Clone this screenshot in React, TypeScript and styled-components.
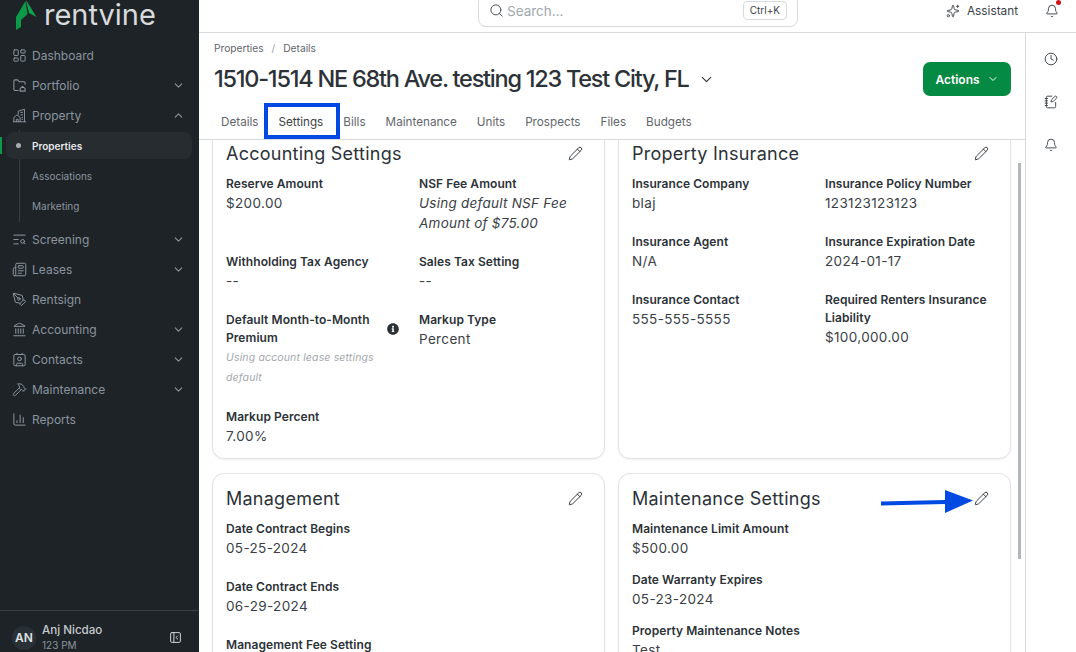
import React from 'react';
import styled, { createGlobalStyle } from 'styled-components';
import {
  Bell,
  ChartColumn,
  ChevronDown,
  ChevronUp,
  Clock,
  Contact,
  Hammer,
  Landmark,
  LayoutDashboard,
  Newspaper,
  NotebookPen,
  PanelLeftClose,
  Pencil,
  PenTool,
  Search,
  Sparkles,
  TextSearch,
} from 'lucide-react';
import { FaInfoCircle } from 'react-icons/fa';

const GlobalStyle = createGlobalStyle`
  html, body {
    margin: 0;
    height: 100%;
    overflow: hidden;
    background: #fff;
    font-family: Inter, "Liberation Sans", sans-serif;
  }
  * { box-sizing: border-box; }
`;

const FolderHome = () => (
  <svg width="15" height="15" viewBox="0 0 24 24" fill="none" stroke="currentColor" strokeWidth="1.7" strokeLinecap="round" strokeLinejoin="round">
    <path d="M10 20H5a2 2 0 0 1-2-2V5a2 2 0 0 1 2-2h4l2.5 3H19a2 2 0 0 1 2 2v2" />
    <path d="M13 17l4-3.5 4 3.5v4h-8z" />
  </svg>
);

const Buildings = () => (
  <svg width="15" height="15" viewBox="0 0 24 24" fill="none" stroke="currentColor" strokeWidth="1.5" strokeLinecap="round" strokeLinejoin="round">
    <path d="M2 22h20" />
    <path d="M10 10V5l10-3v20" />
    <path d="M3 22v-7l5-4 5 4v7" />
    <path d="M7 22v-4h3v4" />
    <path d="M14 7h3M14 11h3M16 15h1M16 18h1" />
  </svg>
);

const navTop = [
  { label: 'Dashboard', icon: <LayoutDashboard size={15} strokeWidth={1.6} /> },
  { label: 'Portfolio', icon: <FolderHome />, arrow: 'down' },
  { label: 'Property', icon: <Buildings />, arrow: 'up' },
];

const navBottom = [
  { label: 'Screening', icon: <TextSearch size={15} strokeWidth={1.6} />, arrow: 'down' },
  { label: 'Leases', icon: <Newspaper size={15} strokeWidth={1.6} />, arrow: 'down' },
  { label: 'Rentsign', icon: <PenTool size={15} strokeWidth={1.6} /> },
  { label: 'Accounting', icon: <Landmark size={15} strokeWidth={1.6} />, arrow: 'down' },
  { label: 'Contacts', icon: <Contact size={15} strokeWidth={1.6} />, arrow: 'down' },
  { label: 'Maintenance', icon: <Hammer size={15} strokeWidth={1.6} />, arrow: 'down' },
  { label: 'Reports', icon: <ChartColumn size={15} strokeWidth={1.6} /> },
];

const tabs = ['Details', 'Settings', 'Bills', 'Maintenance', 'Units', 'Prospects', 'Files', 'Budgets'];

const NavRow = ({ item }: { item: { label: string; icon: React.ReactNode; arrow?: string } }) => (
  <NavItem>
    <NavIcon>{item.icon}</NavIcon>
    <NavLabel>{item.label}</NavLabel>
    {item.arrow === 'down' && <ChevronDown size={13} />}
    {item.arrow === 'up' && <ChevronUp size={13} />}
  </NavItem>
);

const Field = ({ label, value }: { label: string; value?: string }) => (
  <FieldBox>
    <FieldLabel>{label}</FieldLabel>
    {value && <FieldValue>{value}</FieldValue>}
  </FieldBox>
);

const CardHead = ({ title }: { title: string }) => (
  <CardHeader>
    <CardTitle>{title}</CardTitle>
    <Pencil size={15} strokeWidth={1.5} color="#2f353a" />
  </CardHeader>
);

const App = () => {
  return (
    <Shell>
      <GlobalStyle />
      <Sidebar>
        <Logo>
          <svg width="21" height="30" viewBox="0 0 21 30">
            <path d="M10 0 L20.500 17 L13 13 z" fill="#12a550" />
            <path d="M9.500 1 L11.500 14 L5 20 L5 27 L0 30 L0 17 z" fill="#0b9a47" />
          </svg>
          <LogoText>rentvine</LogoText>
        </Logo>
        <Nav>
          {navTop.map((item) => (
            <NavRow key={item.label} item={item} />
          ))}
          <SubNav>
            <ActiveMark />
            <SubItem $active>
              <Dot />
              Properties
            </SubItem>
            <SubItem>Associations</SubItem>
            <SubItem>Marketing</SubItem>
          </SubNav>
          {navBottom.map((item) => (
            <NavRow key={item.label} item={item} />
          ))}
        </Nav>
        <UserBar>
          <Avatar>AN</Avatar>
          <UserText>
            <UserName>Anj Nicdao</UserName>
            <UserOrg>123 PM</UserOrg>
          </UserText>
          <PanelLeftClose size={13} strokeWidth={1.8} color="#d5d8db" />
        </UserBar>
      </Sidebar>

      <Main>
        <TopBar>
          <SearchBox>
            <Search size={15} strokeWidth={1.6} color="#4b5258" />
            <SearchText>Search...</SearchText>
            <Kbd>Ctrl+K</Kbd>
          </SearchBox>
          <TopActions>
            <Assistant>
              <Sparkles size={14} strokeWidth={1.6} />
              Assistant
            </Assistant>
            <BellWrap>
              <Bell size={14} strokeWidth={1.5} />
              <RedDot />
            </BellWrap>
          </TopActions>
        </TopBar>

        <Body>
          <Content>
            <PageHead>
              <Crumbs>
                <span>Properties</span>
                <CrumbSep>/</CrumbSep>
                <span>Details</span>
              </Crumbs>
              <TitleRow>
                <PageTitle>1510-1514 NE 68th Ave. testing 123 Test City, FL</PageTitle>
                <ChevronDown size={17} strokeWidth={1.6} color="#2c3238" />
                <ActionButton>
                  Actions
                  <ChevronDown size={12} strokeWidth={2} />
                </ActionButton>
              </TitleRow>
              <Tabs>
                {tabs.map((t) => (
                  <Tab key={t} $active={t === 'Settings'}>
                    {t}
                  </Tab>
                ))}
              </Tabs>
            </PageHead>

            <Scroller>
              <CardGrid>
                <Card $height={331}>
                  <CardHead title="Accounting Settings" />
                  <TwoCol>
                    <FieldBox>
                      <FieldLabel>Reserve Amount</FieldLabel>
                      <FieldValue>$200.00</FieldValue>
                    </FieldBox>
                    <FieldBox>
                      <FieldLabel>NSF Fee Amount</FieldLabel>
                      <ItalicValue>Using default NSF Fee Amount of $75.00</ItalicValue>
                    </FieldBox>
                    <Field label="Withholding Tax Agency" value="--" />
                    <Field label="Sales Tax Setting" value="--" />
                    <FieldBox>
                      <LabelWithInfo>
                        <FieldLabel>Default Month-to-Month Premium</FieldLabel>
                        <FaInfoCircle size={12} color="#2b3036" />
                      </LabelWithInfo>
                      <Hint>Using account lease settings default</Hint>
                    </FieldBox>
                    <Field label="Markup Type" value="Percent" />
                    <Field label="Markup Percent" value="7.00%" />
                  </TwoCol>
                </Card>

                <Card $height={331}>
                  <CardHead title="Property Insurance" />
                  <TwoCol>
                    <Field label="Insurance Company" value="blaj" />
                    <Field label="Insurance Policy Number" value="123123123123" />
                    <Field label="Insurance Agent" value="N/A" />
                    <Field label="Insurance Expiration Date" value="2024-01-17" />
                    <Field label="Insurance Contact" value="555-555-5555" />
                    <Field label="Required Renters Insurance Liability" value="$100,000.00" />
                  </TwoCol>
                </Card>

                <Card>
                  <CardHead title="Management" />
                  <OneCol $gap={20}>
                    <Field label="Date Contract Begins" value="05-25-2024" />
                    <Field label="Date Contract Ends" value="06-29-2024" />
                    <Field label="Management Fee Setting" />
                  </OneCol>
                </Card>

                <Card>
                  <CardHead title="Maintenance Settings" />
                  <OneCol $gap={13}>
                    <Field label="Maintenance Limit Amount" value="$500.00" />
                    <Field label="Date Warranty Expires" value="05-23-2024" />
                    <Field label="Property Maintenance Notes" value="Test" />
                  </OneCol>
                </Card>
              </CardGrid>
              <ScrollThumb />
            </Scroller>
          </Content>

          <Rail>
            <Clock size={14} strokeWidth={1.6} />
            <NotebookPen size={14} strokeWidth={1.6} />
            <Bell size={14} strokeWidth={1.6} />
          </Rail>
        </Body>
      </Main>

      <TabHighlight />
      <ArrowMark width="100" height="30" viewBox="0 0 100 30">
        <path d="M1 13.500 L65 12 L65 2 L93 12.500 L65 25 L65 16 L1 17.500 z" fill="#0049e3" />
      </ArrowMark>
    </Shell>
  );
};

const Shell = styled.div`
  position: relative;
  display: flex;
  width: 1076px;
  height: 652px;
  overflow: hidden;
  color: #2c3238;
`;

const Sidebar = styled.aside`
  display: flex;
  flex-direction: column;
  flex: 0 0 199px;
  height: 652px;
  background: #1e2328;
  color: #8b949e;
`;

const Logo = styled.div`
  display: flex;
  align-items: flex-start;
  gap: 7px;
  height: 40px;
  padding-left: 16px;
`;

const LogoText = styled.span`
  font-size: 29px;
  line-height: 30px;
  color: #d8dadc;
`;

const Nav = styled.nav`
  display: flex;
  flex-direction: column;
  flex: 1;
`;

const NavItem = styled.div`
  display: flex;
  align-items: center;
  height: 30px;
  padding: 0 14px 0 12px;
  flex: none;
`;

const NavIcon = styled.span`
  display: flex;
  width: 20px;
`;

const NavLabel = styled.span`
  flex: 1;
  font-size: 12px;
`;

const SubNav = styled.div`
  position: relative;
  display: flex;
  flex-direction: column;
  height: 94px;
  padding: 2px 7px 0 6px;

  &::before {
    content: '';
    position: absolute;
    left: 19px;
    top: 0;
    height: 92px;
    width: 1px;
    background: #363d44;
  }
`;

const ActiveMark = styled.span`
  position: absolute;
  left: 0;
  top: 7px;
  width: 2px;
  height: 17px;
  background: #0b9a47;
`;

const SubItem = styled.div<{ $active?: boolean }>`
  position: relative;
  display: flex;
  align-items: center;
  height: ${({ $active }) => ($active ? '27px' : '30px')};
  margin-bottom: ${({ $active }) => ($active ? '1.500px' : '0')};
  padding-left: 26px;
  border-radius: 8px;
  font-size: 10px;
  font-weight: ${({ $active }) => ($active ? 600 : 400)};
  background: ${({ $active }) => ($active ? '#272c31' : 'transparent')};
  color: ${({ $active }) => ($active ? '#e6e8ea' : '#8b949e')};
`;

const Dot = styled.span`
  position: absolute;
  left: 10px;
  width: 5px;
  height: 5px;
  border-radius: 50%;
  background: #a8adb2;
`;

const UserBar = styled.div`
  display: flex;
  align-items: center;
  height: 42px;
  padding: 12px 17px 0 12px;
  border-top: 1px solid #3a4046;
  flex: none;
`;

const Avatar = styled.div`
  display: flex;
  align-items: center;
  justify-content: center;
  width: 24px;
  height: 24px;
  border-radius: 50%;
  background: #2a3136;
  color: #dfe1e3;
  font-size: 12px;
  font-weight: 600;
`;

const UserText = styled.div`
  flex: 1;
  margin-left: 6px;
`;

const UserName = styled.div`
  font-size: 11.600px;
  font-weight: 500;
  line-height: 15px;
  color: #c6cacd;
`;

const UserOrg = styled.div`
  font-size: 10px;
  line-height: 15px;
  color: #8b949e;
`;

const Main = styled.div`
  display: flex;
  flex-direction: column;
  flex: 1;
  min-width: 0;
`;

const TopBar = styled.header`
  position: relative;
  display: flex;
  align-items: flex-start;
  justify-content: flex-end;
  height: 33px;
  border-bottom: 1px solid #d8dbde;
  flex: none;
`;

const SearchBox = styled.div`
  position: absolute;
  left: 279px;
  top: -6px;
  display: flex;
  align-items: center;
  width: 320px;
  height: 33px;
  padding: 0 10px 0 10px;
  border: 1px solid #d8dbde;
  border-radius: 8px;
`;

const SearchText = styled.span`
  flex: 1;
  margin-left: 3px;
  font-size: 13.500px;
  color: #a0a7ad;
`;

const Kbd = styled.span`
  padding: 2px 6px;
  border: 1px solid #d8dbde;
  border-radius: 4px;
  font-size: 10px;
  line-height: 13px;
  color: #3c4248;
`;

const TopActions = styled.div`
  display: flex;
  align-items: center;
  height: 22px;
  margin-right: 17px;
  gap: 27px;
`;

const Assistant = styled.div`
  display: flex;
  align-items: center;
  gap: 7px;
  font-size: 11.800px;
  color: #3c4248;
`;

const BellWrap = styled.div`
  position: relative;
  display: flex;
`;

const RedDot = styled.span`
  position: absolute;
  right: -2px;
  top: -4px;
  width: 5px;
  height: 5px;
  border-radius: 50%;
  background: #d0121b;
`;

const Body = styled.div`
  display: flex;
  flex: 1;
  min-height: 0;
`;

const Content = styled.div`
  display: flex;
  flex-direction: column;
  flex: 1;
  min-width: 0;
`;

const PageHead = styled.div`
  height: 107px;
  padding: 8px 14px 0 15px;
  border-bottom: 1px solid #d8dbde;
  flex: none;
`;

const Crumbs = styled.div`
  display: flex;
  gap: 8px;
  font-size: 10.200px;
  line-height: 14px;
  color: #5f666c;
`;

const CrumbSep = styled.span`
  color: #9aa0a6;
`;

const TitleRow = styled.div`
  display: flex;
  align-items: center;
  height: 34px;
  margin-top: 7px;
  gap: 9px;
`;

const PageTitle = styled.h1`
  margin: 0 0 1px;
  font-size: 23.500px;
  font-weight: 500;
  letter-spacing: -1.240px;
  color: #2c3238;
  white-space: nowrap;
`;

const ActionButton = styled.button`
  display: flex;
  align-items: center;
  justify-content: center;
  gap: 7px;
  width: 88px;
  height: 34px;
  margin-left: auto;
  border: 0;
  border-radius: 7px;
  background: #058a43;
  color: #fff;
  font-family: inherit;
  font-size: 12px;
  font-weight: 600;
`;

const Tabs = styled.div`
  display: flex;
  margin: 9px 0 0 0;
`;

const Tab = styled.div<{ $active?: boolean }>`
  position: relative;
  display: flex;
  align-items: center;
  height: 34px;
  padding: 0 7px;
  margin-right: 6px;
  font-size: 11.700px;
  color: #5f666c;

  ${({ $active }) =>
    $active &&
    `
    color: #3c4248;
    &::after {
      content: '';
      position: absolute;
      left: 0;
      right: 0;
      bottom: 0;
      height: 1px;
      background: #058a43;
    }
  `}
`;

const Scroller = styled.div`
  position: relative;
  flex: 1;
  min-height: 0;
  overflow: hidden;
  padding: 0 14px 0 13px;
`;

const CardGrid = styled.div`
  display: grid;
  grid-template-columns: 392.500px 392.500px;
  column-gap: 13.500px;
  row-gap: 14px;
  margin-top: -12px;
`;

const Card = styled.section<{ $height?: number }>`
  height: ${({ $height }) => ($height ? `${$height}px` : '240px')};
  padding: 12px 13px;
  border: 1px solid #e0e2e4;
  border-radius: 12px;
  background: #fff;
  box-shadow: 0 1px 2px rgba(0, 0, 0, 0.06);
`;

const CardHeader = styled.div`
  display: flex;
  align-items: center;
  justify-content: space-between;
  height: 24px;
  padding-right: 8px;
  margin-bottom: 9.500px;
`;

const CardTitle = styled.h2`
  margin: 0;
  font-size: 18px;
  font-weight: 400;
  letter-spacing: 0.250px;
  color: #2c3238;
`;

const TwoCol = styled.div`
  display: grid;
  grid-template-columns: 193px 172px;
  row-gap: 20px;
  align-items: start;
`;

const OneCol = styled.div<{ $gap: number }>`
  display: flex;
  flex-direction: column;
  gap: ${({ $gap }) => $gap}px;
`;

const FieldBox = styled.div`
  min-width: 0;
`;

const FieldLabel = styled.div`
  font-size: 12px;
  font-weight: 600;
  line-height: 18px;
  letter-spacing: 0.060px;
  color: #2c3238;
`;

const FieldValue = styled.div`
  font-size: 13.500px;
  line-height: 20px;
  letter-spacing: 0.350px;
  color: #3a4046;
`;

const ItalicValue = styled(FieldValue)`
  font-style: italic;
  letter-spacing: 0.250px;
`;

const LabelWithInfo = styled.div`
  display: flex;
  align-items: center;
  justify-content: space-between;
  padding-right: 20px;
  gap: 4px;

  svg {
    flex: none;
  }
`;

const Hint = styled.div`
  margin-top: 1px;
  font-size: 10.500px;
  font-style: italic;
  line-height: 20px;
  letter-spacing: 0.150px;
  color: #a3a8ad;
  width: 160px;
`;

const ScrollThumb = styled.span`
  position: absolute;
  right: 4px;
  top: 23px;
  width: 3px;
  height: 396px;
  background: #b0b8ba;
`;

const Rail = styled.aside`
  display: flex;
  flex-direction: column;
  align-items: center;
  gap: 29px;
  flex: 0 0 51px;
  padding-top: 19px;
  border-left: 1px solid #d8dbde;
  color: #3c4248;
`;

const TabHighlight = styled.span`
  position: absolute;
  left: 264px;
  top: 103px;
  width: 76px;
  height: 36px;
  border: 4px solid #0049e3;
  pointer-events: none;
`;

const ArrowMark = styled.svg`
  position: absolute;
  left: 880px;
  top: 488px;
  pointer-events: none;
`;

export default App;
